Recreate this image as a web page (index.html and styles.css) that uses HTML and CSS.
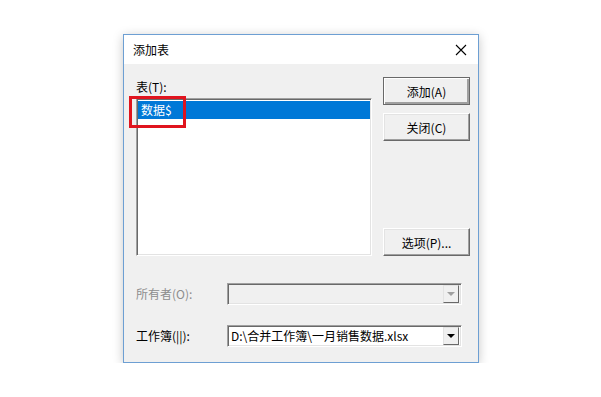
FILE: index.html
```html
<!DOCTYPE html>
<html lang="zh-CN">

<head>
    <meta charset="UTF-8">
    <meta name="viewport" content="width=device-width, initial-scale=1.0">
    <title>添加表</title>
    <link rel="stylesheet" href="styles.css">
</head>

<body>
    <div class="dialog">
        <div class="titlebar">
            <span class="title">添加表</span>
            <svg class="close" width="12" height="12" viewBox="0 0 12 12">
                <path d="M1 1 L11 11 M11 1 L1 11" stroke="#000" stroke-width="1.1" fill="none" />
            </svg>
        </div>
        <div class="content">
            <div class="main">
                <div class="left">
                    <div class="label">表(T):</div>
                    <div class="listbox">
                        <div class="item selected">数据$</div>
                        <div class="mark"></div>
                    </div>
                </div>
                <div class="buttons">
                    <div class="btn default">添加(A)</div>
                    <div class="btn">关闭(C)</div>
                    <div class="spacer"></div>
                    <div class="btn">选项(P)...</div>
                </div>
            </div>
            <div class="row disabled">
                <div class="rowlabel">所有者(O):</div>
                <div class="combo">
                    <span class="value"></span>
                    <span class="arrow"><i></i></span>
                </div>
            </div>
            <div class="row">
                <div class="rowlabel">工作簿(||):</div>
                <div class="combo">
                    <span class="value">D:\合并工作簿\一月销售数据.xlsx</span>
                    <span class="arrow"><i></i></span>
                </div>
            </div>
        </div>
    </div>
</body>

</html>
```

FILE: styles.css
```css
* {
    margin: 0;
    padding: 0;
    box-sizing: border-box;
}

body {
    background: #fff;
    font-family: "Microsoft YaHei", "Noto Sans CJK SC", "Noto Sans", sans-serif;
    font-size: 12px;
    color: #000;
}

.dialog {
    width: 356px;
    height: 329px;
    margin: 34px 0 0 123px;
    border: 1px solid #6d9fd3;
    box-shadow: 0 2px 10px rgba(0, 0, 0, 0.22);
    background: #f0f0f0;
    display: flex;
    flex-direction: column;
}

.titlebar {
    height: 29px;
    background: #fff;
    display: flex;
    align-items: center;
    justify-content: space-between;
    padding: 0 10px 0 9px;
    flex: none;
}

.title {
    font-size: 12px;
    line-height: 14px;
}

.close {
    margin-right: 1px;
}

.content {
    flex: 1;
    padding: 13px 8px 0 12px;
    display: flex;
    flex-direction: column;
}

.main {
    display: flex;
    gap: 11px;
}

.left {
    width: 236px;
    display: flex;
    flex-direction: column;
}

.label {
    line-height: 14px;
    margin-top: 3px;
    height: 18px;
}

.listbox {
    position: relative;
    height: 158px;
    background: #fff;
    border-top: 1px solid #a0a0a0;
    border-left: 1px solid #a0a0a0;
    border-right: 1px solid #fff;
    border-bottom: 1px solid #fff;
    box-shadow: inset 1px 1px 0 #696969, inset -1px -1px 0 #e3e3e3;
    padding: 2px 1px 0 1px;
}

.item {
    height: 18px;
    line-height: 18px;
    padding-left: 3px;
}

.item.selected {
    background: #0078d7;
    color: #fff;
}

.mark {
    position: absolute;
    left: -8px;
    top: -3px;
    width: 57px;
    height: 32px;
    border: 3px solid #e0141e;
}

.buttons {
    width: 87px;
    display: flex;
    flex-direction: column;
    gap: 8px;
}

.spacer {
    flex: 1;
}

.btn {
    height: 28px;
    background: #f0f0f0;
    display: flex;
    align-items: center;
    justify-content: center;
    border-top: 1px solid #fff;
    border-left: 1px solid #fff;
    border-right: 1px solid #696969;
    border-bottom: 1px solid #696969;
    box-shadow: inset -1px -1px 0 #a0a0a0, inset 1px 1px 0 #e3e3e3;
}

.btn.default {
    border: 1px solid #696969;
    box-shadow: inset 1px 1px 0 #fff, inset -2px -2px 0 #a0a0a0;
}

.row {
    display: flex;
    align-items: center;
    margin-top: 27px;
}

.row + .row {
    margin-top: 20px;
}

.rowlabel {
    width: 91px;
    line-height: 22px;
}

.disabled .rowlabel {
    color: #8d8d8d;
}

.combo {
    width: 235px;
    height: 22px;
    display: flex;
    background: #fff;
    border-top: 1px solid #a0a0a0;
    border-left: 1px solid #a0a0a0;
    border-right: 1px solid #fff;
    border-bottom: 1px solid #fff;
    box-shadow: inset 1px 1px 0 #696969, inset -1px -1px 0 #e3e3e3;
    padding: 1px;
}

.disabled .combo {
    background: #f0f0f0;
}

.value {
    flex: 1;
    line-height: 18px;
    padding-left: 2px;
    white-space: nowrap;
    overflow: hidden;
}

.arrow {
    width: 16px;
    height: 18px;
    margin: 0 1px 0 0;
    background: #f0f0f0;
    border-top: 1px solid #e3e3e3;
    border-left: 1px solid #e3e3e3;
    border-right: 1px solid #696969;
    border-bottom: 1px solid #696969;
    display: flex;
    align-items: center;
    justify-content: center;
}

.arrow i {
    width: 0;
    height: 0;
    border-left: 4px solid transparent;
    border-right: 4px solid transparent;
    border-top: 4px solid #000;
}

.disabled .arrow i {
    border-top-color: #a0a0a0;
}
```
